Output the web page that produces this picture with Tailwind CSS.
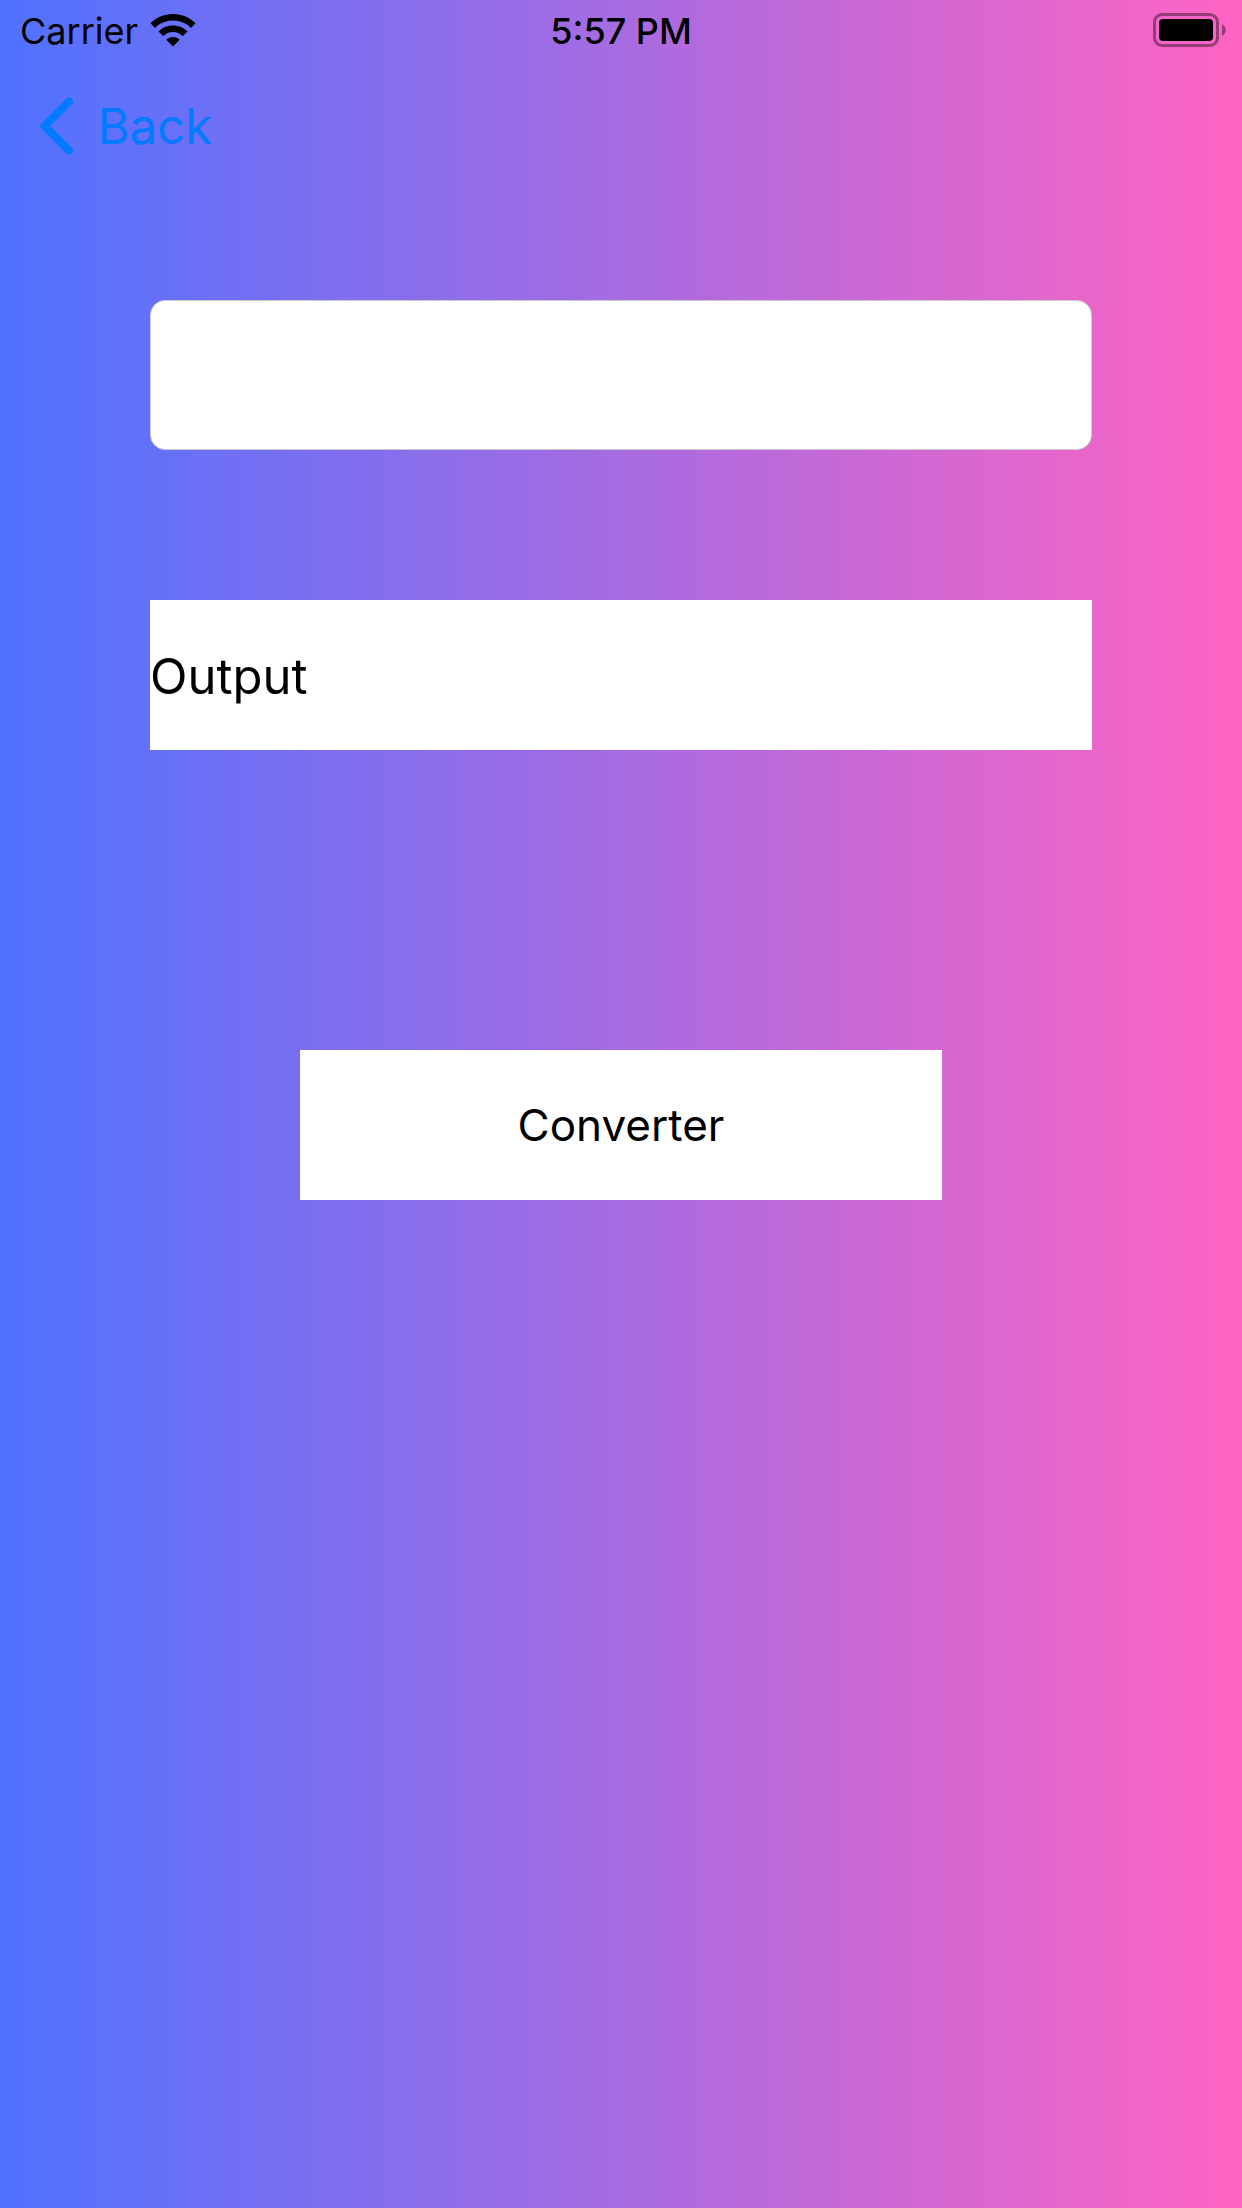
<!DOCTYPE html>
<html lang="en">
<head>
<meta charset="utf-8">
<meta name="viewport" content="width=device-width, initial-scale=1">
<title>Converter</title>
<script src="https://cdn.jsdelivr.net/npm/@tailwindcss/browser@4"></script>
</head>
<body class="flex min-h-screen flex-col bg-[linear-gradient(to_right,#4f72ff,#ff64c3)] font-['Inter',sans-serif] text-black">
  <header>
    <div class="grid h-[60px] grid-cols-3 items-center px-4 pt-0.5 text-[36px] leading-none">
      <div class="flex items-center gap-3 pl-1">
        <span>Carrier</span>
        <svg class="mb-0.5 h-[34px] w-[46px]" viewBox="0 0 46 34" role="img" aria-label="Wi-Fi">
          <path d="M23 1C14 1 6 4.500 .5 10.300L5 15C9.500 10.300 16 7.500 23 7.500S36.500 10.300 41 15L45.500 10.300C40 4.500 32 1 23 1Z"/>
          <path d="M23 12.500C17 12.500 12 14.800 8.500 18.500L13.300 23.200C15.800 20.600 19.200 19 23 19S30.200 20.600 32.700 23.200L37.500 18.500C34 14.800 29 12.500 23 12.500Z"/>
          <path d="M23 24C20.300 24 18 25 16.300 26.700L23 33.600L29.700 26.700C28 25 25.700 24 23 24Z"/>
        </svg>
      </div>
      <time class="text-center font-medium">5:57 PM</time>
      <svg class="mb-0.5 h-[34px] w-[73px] justify-self-end" viewBox="0 0 73 34" role="img" aria-label="Battery full">
        <rect x="1.500" y="1.500" width="63" height="31" rx="7.500" fill="none" stroke="#000" stroke-opacity=".4" stroke-width="3"/>
        <rect x="6" y="6" width="54" height="22" rx="4"/>
        <path d="M69 11C74 14 74 20 69 23Z" fill-opacity=".4"/>
      </svg>
    </div>
    <nav class="flex h-[132px] items-center px-10">
      <a href="#" class="flex items-center gap-6 text-[49px] leading-none text-[#007aff]">
        <svg class="h-[58px] w-[34px]" viewBox="0 0 34 58" fill="none" stroke="currentColor" stroke-width="8" stroke-linecap="round" stroke-linejoin="round" aria-hidden="true">
          <path d="M29 4.500L4.500 29L29 53.500"/>
        </svg>
        <span>Back</span>
      </a>
    </nav>
  </header>
  <main class="flex flex-col px-[150px] pt-[108px]">
    <input type="text" aria-label="Input" class="h-[150px] w-full rounded-[15px] border border-[#cccccc] bg-white px-5 text-[49px] outline-none">
    <output class="mt-[150px] flex h-[150px] items-center bg-white pt-0.5 text-[49px] leading-none">Output</output>
    <button type="button" class="mx-[150px] mt-[300px] h-[150px] bg-white text-[44px] leading-none">Converter</button>
  </main>
</body>
</html>
